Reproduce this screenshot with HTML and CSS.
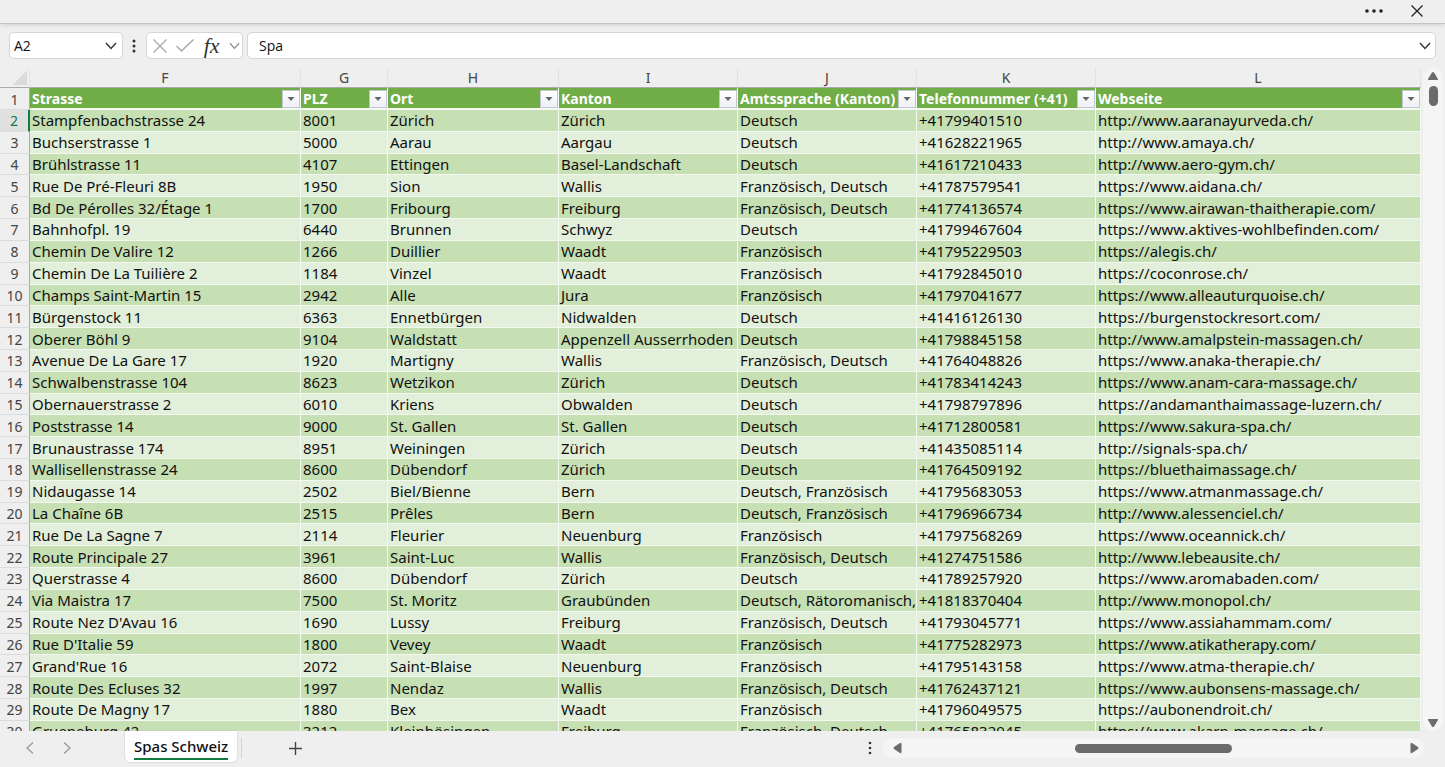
FILE: index.html
```html
<!DOCTYPE html>
<html lang="de">
<head>
    <meta charset="UTF-8">
    <meta name="viewport" content="width=device-width, initial-scale=1.0">
    <title>Spas Schweiz</title>
    <link rel="stylesheet" href="styles.css">
</head>
<body>

    <header class="titlebar">
        <button class="icon-btn" aria-label="Mehr">
            <svg width="18" height="6" viewBox="0 0 18 6" fill="#222"><circle cx="2" cy="3" r="1.8"/><circle cx="9" cy="3" r="1.8"/><circle cx="16" cy="3" r="1.8"/></svg>
        </button>
        <button class="icon-btn" aria-label="Schliessen">
            <svg width="12" height="12" viewBox="0 0 12 12" fill="none" stroke="#222" stroke-width="1.3"><path d="M.5 .5l11 11M11.5 .5l-11 11"/></svg>
        </button>
    </header>

    <div class="formula-row">
        <div class="box name-box">
            <input type="text" class="name-input" aria-label="Namenfeld" value="A2">
            <button class="icon-btn" aria-label="Namen anzeigen">
                <svg width="12" height="8" viewBox="0 0 12 8" fill="none" stroke="#333" stroke-width="1.4"><path d="M1 1l5 5.5L11 1"/></svg>
            </button>
        </div>
        <svg class="dots" width="4" height="14" viewBox="0 0 4 14" fill="#333"><circle cx="2" cy="2" r="1.5"/><circle cx="2" cy="7" r="1.5"/><circle cx="2" cy="12" r="1.5"/></svg>
        <div class="box fx-box">
            <button class="icon-btn" aria-label="Abbrechen">
                <svg width="14" height="14" viewBox="0 0 14 14" fill="none" stroke="#a6a6a6" stroke-width="1.2"><path d="M.5 .5l13 13M13.5 .5l-13 13"/></svg>
            </button>
            <button class="icon-btn" aria-label="Eingeben">
                <svg width="18" height="13" viewBox="0 0 18 13" fill="none" stroke="#a6a6a6" stroke-width="1.3"><path d="M.5 7l5 5L17.5 .5"/></svg>
            </button>
            <button class="icon-btn fx" aria-label="Funktion einfügen">fx</button>
            <button class="icon-btn" aria-label="Funktionen">
                <svg width="11" height="8" viewBox="0 0 12 8" fill="none" stroke="#888" stroke-width="1.3"><path d="M1 1l5 5.5L11 1"/></svg>
            </button>
        </div>
        <div class="box formula-box">
            <input type="text" class="formula-input" aria-label="Bearbeitungsleiste" value="Spa">
            <button class="icon-btn" aria-label="Erweitern">
                <svg width="12" height="8" viewBox="0 0 12 8" fill="none" stroke="#333" stroke-width="1.4"><path d="M1 1l5 5.5L11 1"/></svg>
            </button>
        </div>
    </div>

    <main class="sheet">
        <div class="grid">
            <table id="spaTable">
                <colgroup>
                    <col class="col-num">
                    <col class="col-strasse">
                    <col class="col-plz">
                    <col class="col-ort">
                    <col class="col-wide">
                    <col class="col-wide">
                    <col class="col-wide">
                    <col>
                </colgroup>
                <thead></thead>
                <tbody></tbody>
            </table>
        </div>
        <div class="vscroll">
            <svg width="12" height="10" viewBox="0 0 12 10" fill="#6b6b6b"><path d="M5 1.5Q6 .3 7 1.5L11 8Q11.3 9 10.3 9H1.7Q.7 9 1 8z"/></svg>
            <div class="vthumb"></div>
            <svg class="arrow-down" width="12" height="10" viewBox="0 0 12 10" fill="#6b6b6b"><path d="M5 8.5Q6 9.7 7 8.5L11 2Q11.3 1 10.3 1H1.7Q.7 1 1 2z"/></svg>
        </div>
    </main>

    <footer class="tabbar">
        <nav class="tabs">
            <button class="icon-btn" aria-label="Vorheriges Blatt">
                <svg width="8" height="12" viewBox="0 0 8 12" fill="none" stroke="#999" stroke-width="1.3"><path d="M7 .5L1 6l6 5.5"/></svg>
            </button>
            <button class="icon-btn next" aria-label="Nächstes Blatt">
                <svg width="8" height="12" viewBox="0 0 8 12" fill="none" stroke="#999" stroke-width="1.3"><path d="M1 .5L7 6l-6 5.5"/></svg>
            </button>
            <button class="tab"><span>Spas Schweiz</span></button>
            <div class="divider"></div>
            <button class="icon-btn add" aria-label="Neues Blatt">
                <svg width="13" height="13" viewBox="0 0 13 13" stroke="#444" stroke-width="1.4"><path d="M6.5 0v13M0 6.5h13"/></svg>
            </button>
        </nav>
        <svg class="dots" width="4" height="14" viewBox="0 0 4 14" fill="#333"><circle cx="2" cy="2" r="1.3"/><circle cx="2" cy="7" r="1.3"/><circle cx="2" cy="12" r="1.3"/></svg>
        <div class="hscroll">
            <svg width="9" height="12" viewBox="0 0 9 12" fill="#6b6b6b"><path d="M1 5Q0 6 1 7l6 4q1.5 .5 1.5-1V2Q8.500 .5 7 1z"/></svg>
            <div class="htrack"><div class="hthumb"></div></div>
            <svg width="9" height="12" viewBox="0 0 9 12" fill="#6b6b6b"><path d="M8 5Q9 6 8 7l-6 4Q.5 11.5 .5 10V2Q.5 .5 2 1z"/></svg>
        </div>
    </footer>

    <script>
        const letters = ['F', 'G', 'H', 'I', 'J', 'K', 'L'];
        const headers = ['Strasse', 'PLZ', 'Ort', 'Kanton', 'Amtssprache (Kanton)', 'Telefonnummer (+41)', 'Webseite'];
        const spas = [
            ['Stampfenbachstrasse 24', '8001', 'Zürich', 'Zürich', 'Deutsch', '+41799401510', 'http://www.aaranayurveda.ch/'],
            ['Buchserstrasse 1', '5000', 'Aarau', 'Aargau', 'Deutsch', '+41628221965', 'http://www.amaya.ch/'],
            ['Brühlstrasse 11', '4107', 'Ettingen', 'Basel-Landschaft', 'Deutsch', '+41617210433', 'http://www.aero-gym.ch/'],
            ['Rue De Pré-Fleuri 8B', '1950', 'Sion', 'Wallis', 'Französisch, Deutsch', '+41787579541', 'https://www.aidana.ch/'],
            ['Bd De Pérolles 32/Étage 1', '1700', 'Fribourg', 'Freiburg', 'Französisch, Deutsch', '+41774136574', 'https://www.airawan-thaitherapie.com/'],
            ['Bahnhofpl. 19', '6440', 'Brunnen', 'Schwyz', 'Deutsch', '+41799467604', 'https://www.aktives-wohlbefinden.com/'],
            ['Chemin De Valire 12', '1266', 'Duillier', 'Waadt', 'Französisch', '+41795229503', 'https://alegis.ch/'],
            ['Chemin De La Tuilière 2', '1184', 'Vinzel', 'Waadt', 'Französisch', '+41792845010', 'https://coconrose.ch/'],
            ['Champs Saint-Martin 15', '2942', 'Alle', 'Jura', 'Französisch', '+41797041677', 'https://www.alleauturquoise.ch/'],
            ['Bürgenstock 11', '6363', 'Ennetbürgen', 'Nidwalden', 'Deutsch', '+41416126130', 'https://burgenstockresort.com/'],
            ['Oberer Böhl 9', '9104', 'Waldstatt', 'Appenzell Ausserrhoden', 'Deutsch', '+41798845158', 'http://www.amalpstein-massagen.ch/'],
            ['Avenue De La Gare 17', '1920', 'Martigny', 'Wallis', 'Französisch, Deutsch', '+41764048826', 'https://www.anaka-therapie.ch/'],
            ['Schwalbenstrasse 104', '8623', 'Wetzikon', 'Zürich', 'Deutsch', '+41783414243', 'https://www.anam-cara-massage.ch/'],
            ['Obernauerstrasse 2', '6010', 'Kriens', 'Obwalden', 'Deutsch', '+41798797896', 'https://andamanthaimassage-luzern.ch/'],
            ['Poststrasse 14', '9000', 'St. Gallen', 'St. Gallen', 'Deutsch', '+41712800581', 'https://www.sakura-spa.ch/'],
            ['Brunaustrasse 174', '8951', 'Weiningen', 'Zürich', 'Deutsch', '+41435085114', 'http://signals-spa.ch/'],
            ['Wallisellenstrasse 24', '8600', 'Dübendorf', 'Zürich', 'Deutsch', '+41764509192', 'https://bluethaimassage.ch/'],
            ['Nidaugasse 14', '2502', 'Biel/Bienne', 'Bern', 'Deutsch, Französisch', '+41795683053', 'https://www.atmanmassage.ch/'],
            ['La Chaîne 6B', '2515', 'Prêles', 'Bern', 'Deutsch, Französisch', '+41796966734', 'http://www.alessenciel.ch/'],
            ['Rue De La Sagne 7', '2114', 'Fleurier', 'Neuenburg', 'Französisch', '+41797568269', 'https://www.oceannick.ch/'],
            ['Route Principale 27', '3961', 'Saint-Luc', 'Wallis', 'Französisch, Deutsch', '+41274751586', 'http://www.lebeausite.ch/'],
            ['Querstrasse 4', '8600', 'Dübendorf', 'Zürich', 'Deutsch', '+41789257920', 'https://www.aromabaden.com/'],
            ['Via Maistra 17', '7500', 'St. Moritz', 'Graubünden', 'Deutsch, Rätoromanisch,', '+41818370404', 'http://www.monopol.ch/'],
            ["Route Nez D'Avau 16", '1690', 'Lussy', 'Freiburg', 'Französisch, Deutsch', '+41793045771', 'https://www.assiahammam.com/'],
            ["Rue D'Italie 59", '1800', 'Vevey', 'Waadt', 'Französisch', '+41775282973', 'https://www.atikatherapy.com/'],
            ["Grand'Rue 16", '2072', 'Saint-Blaise', 'Neuenburg', 'Französisch', '+41795143158', 'https://www.atma-therapie.ch/'],
            ['Route Des Ecluses 32', '1997', 'Nendaz', 'Wallis', 'Französisch, Deutsch', '+41762437121', 'https://www.aubonsens-massage.ch/'],
            ['Route De Magny 17', '1880', 'Bex', 'Waadt', 'Französisch', '+41796049575', 'https://aubonendroit.ch/'],
            ['Grueneburg 42', '3212', 'Kleinbösingen', 'Freiburg', 'Französisch, Deutsch', '+41765832945', 'https://www.akarn-massage.ch/']
        ];

        const table = document.getElementById('spaTable');
        const thead = table.querySelector('thead');
        const tbody = table.querySelector('tbody');

        // Column letters
        const letterRow = document.createElement('tr');
        letterRow.className = 'letters';
        letterRow.innerHTML = '<td class="corner"></td>' + letters.map(l => `<th scope="col">${l}</th>`).join('');
        thead.appendChild(letterRow);

        // Header row with filter buttons
        const headerRow = document.createElement('tr');
        headerRow.className = 'headers';
        headerRow.innerHTML = '<th class="num" scope="row">1</th>' + headers.map(h =>
            `<th scope="col"><div class="head"><span>${h}</span><button class="filter" aria-label="${h} filtern"><svg width="8" height="4" viewBox="0 0 8 4" fill="#666"><path d="M.5 0h7L4 4z"/></svg></button></div></th>`
        ).join('');
        thead.appendChild(headerRow);

        // Data rows
        spas.forEach((row, index) => {
            const tr = document.createElement('tr');
            const th = document.createElement('th');
            th.className = index === 0 ? 'num active' : 'num';
            th.scope = 'row';
            th.textContent = index + 2;
            tr.appendChild(th);
            row.forEach(cell => {
                const td = document.createElement('td');
                td.textContent = cell;
                tr.appendChild(td);
            });
            tbody.appendChild(tr);
        });
    </script>

</body>
</html>
```
FILE: styles.css
```css
* {
    box-sizing: border-box;
}
body {
    margin: 0;
    height: 100vh;
    display: flex;
    flex-direction: column;
    overflow: hidden;
    background-color: #efefef;
    color: #111;
    font-family: "Open Sans", "Noto Sans", sans-serif;
    font-size: 14px;
}
button, input {
    font: inherit;
    color: inherit;
    border: 0;
    padding: 0;
    background: none;
}
svg {
    display: block;
    flex-shrink: 0;
}
.icon-btn {
    display: flex;
    align-items: center;
    justify-content: center;
}
.titlebar {
    display: flex;
    justify-content: flex-end;
    align-items: center;
    gap: 28px;
    height: 24px;
    padding: 0 22px 1px 0;
    border-bottom: 1px solid #c4c4c4;
    box-shadow: 0 1px 4px #d0d0d0;
}
.formula-row {
    display: flex;
    align-items: center;
    height: 44px;
    padding: 0 9px 1px;
}
.box {
    display: flex;
    align-items: center;
    height: 27px;
    background-color: #fff;
    border: 1px solid #d6d6d6;
    border-radius: 5px;
}
.name-box {
    width: 114px;
    padding: 0 5px 0 4px;
}
.name-input {
    flex: 1;
    min-width: 0;
}
.formula-row .dots {
    margin: 0 10px 0 9px;
}
.fx-box {
    justify-content: space-between;
    width: 97px;
    padding: 0 2px 0 6px;
}
.fx {
    font-family: "Liberation Serif", serif;
    font-style: italic;
    font-size: 22px;
    line-height: 22px;
    color: #333;
}
.formula-box {
    flex: 1;
    margin-left: 4px;
    padding: 0 4px 0 11px;
}
.formula-input {
    flex: 1;
}
.sheet {
    flex: 1;
    min-height: 0;
    display: flex;
}
.grid {
    flex: 1;
    min-width: 0;
    overflow: hidden;
}
table {
    width: 100%;
    height: calc(100% + 12px);
    table-layout: fixed;
    border-collapse: separate;
    border-spacing: 0;
    font-family: "Noto Sans", sans-serif;
    font-size: 15px;
    line-height: 19px;
}
.col-num {
    width: 30px;
}
.col-strasse {
    width: 271px;
}
.col-plz {
    width: 87px;
}
.col-ort {
    width: 171px;
}
.col-wide {
    width: 179px;
}
th, td {
    padding: 1px 0 0 2px;
    text-align: left;
    white-space: nowrap;
    overflow: hidden;
    border-right: 1px solid #f3f8f0;
    border-bottom: 1px solid #f3f8f0;
}
tbody tr:nth-child(odd) td {
    background-color: #c6e0b4;
}
tbody tr:nth-child(even) td {
    background-color: #e2efda;
}
.letters th, .letters td {
    height: 20px;
    padding: 0;
    text-align: center;
    font-size: 14px;
    font-weight: normal;
    color: #444;
    border-right-color: #e2e2e2;
    border-bottom-color: #ababab;
}
.letters .corner {
    background: linear-gradient(135deg, transparent 50%, #dadada 50%) no-repeat 12px 2px / 15px 15px;
}
.headers th {
    background-color: #70ad47;
    color: #fff;
    font-size: 14px;
    border-bottom-width: 2px;
}
.head {
    display: flex;
    align-items: center;
    justify-content: space-between;
}
.filter {
    display: flex;
    align-items: center;
    justify-content: center;
    width: 18px;
    height: 18px;
    background: linear-gradient(#fff, #eef0f6);
    border: 1px solid #c3c6d4;
}
.headers .num, th.num {
    padding: 1px 0 0;
    text-align: center;
    font-size: 14px;
    font-weight: normal;
    color: #444;
    background-color: #efefef;
    border-right-color: #ababab;
    border-bottom: 1px solid #dcdcdc;
}
th.num.active {
    color: #107c41;
    background-color: #e0e0e0;
    border-right: 2px solid #107c41;
}
.vscroll {
    display: flex;
    flex-direction: column;
    align-items: center;
    width: 20px;
    margin: 0 2px;
    padding: 3px 0;
    background-color: #f5f5f5;
    border-radius: 10px;
}
.vthumb {
    width: 9px;
    height: 20px;
    margin-top: 5px;
    background-color: #6b6b6b;
    border-radius: 5px;
}
.arrow-down {
    margin-top: auto;
}
.tabbar {
    display: flex;
    align-items: center;
    height: 36px;
    padding: 0 21px 2px 0;
}
.tabs {
    flex: 1;
    display: flex;
    align-items: center;
    height: 100%;
    padding-left: 26px;
}
.next {
    margin-left: 29px;
}
.tab {
    align-self: flex-start;
    height: 31px;
    margin-left: 54px;
    padding: 0 9px;
    background-color: #fff;
    border-radius: 0 0 5px 5px;
    box-shadow: 0 0 2px #bbb;
    font-family: "Noto Sans", sans-serif;
    font-weight: 500;
    font-size: 15px;
}
.tab span {
    display: block;
    line-height: 24px;
    border-bottom: 2px solid #107c41;
}
.divider {
    width: 1px;
    height: 20px;
    margin-left: 4px;
    background-color: #d0d0d0;
}
.add {
    margin-left: 47px;
}
.hscroll {
    display: flex;
    align-items: center;
    width: 38%;
    height: 20px;
    margin-left: 11px;
    padding: 0 5px 0 10px;
    background-color: #f5f5f5;
    border-radius: 10px;
}
.htrack {
    flex: 1;
}
.hthumb {
    width: 31%;
    height: 9px;
    margin-left: 34%;
    background-color: #6b6b6b;
    border-radius: 5px;
}
```
